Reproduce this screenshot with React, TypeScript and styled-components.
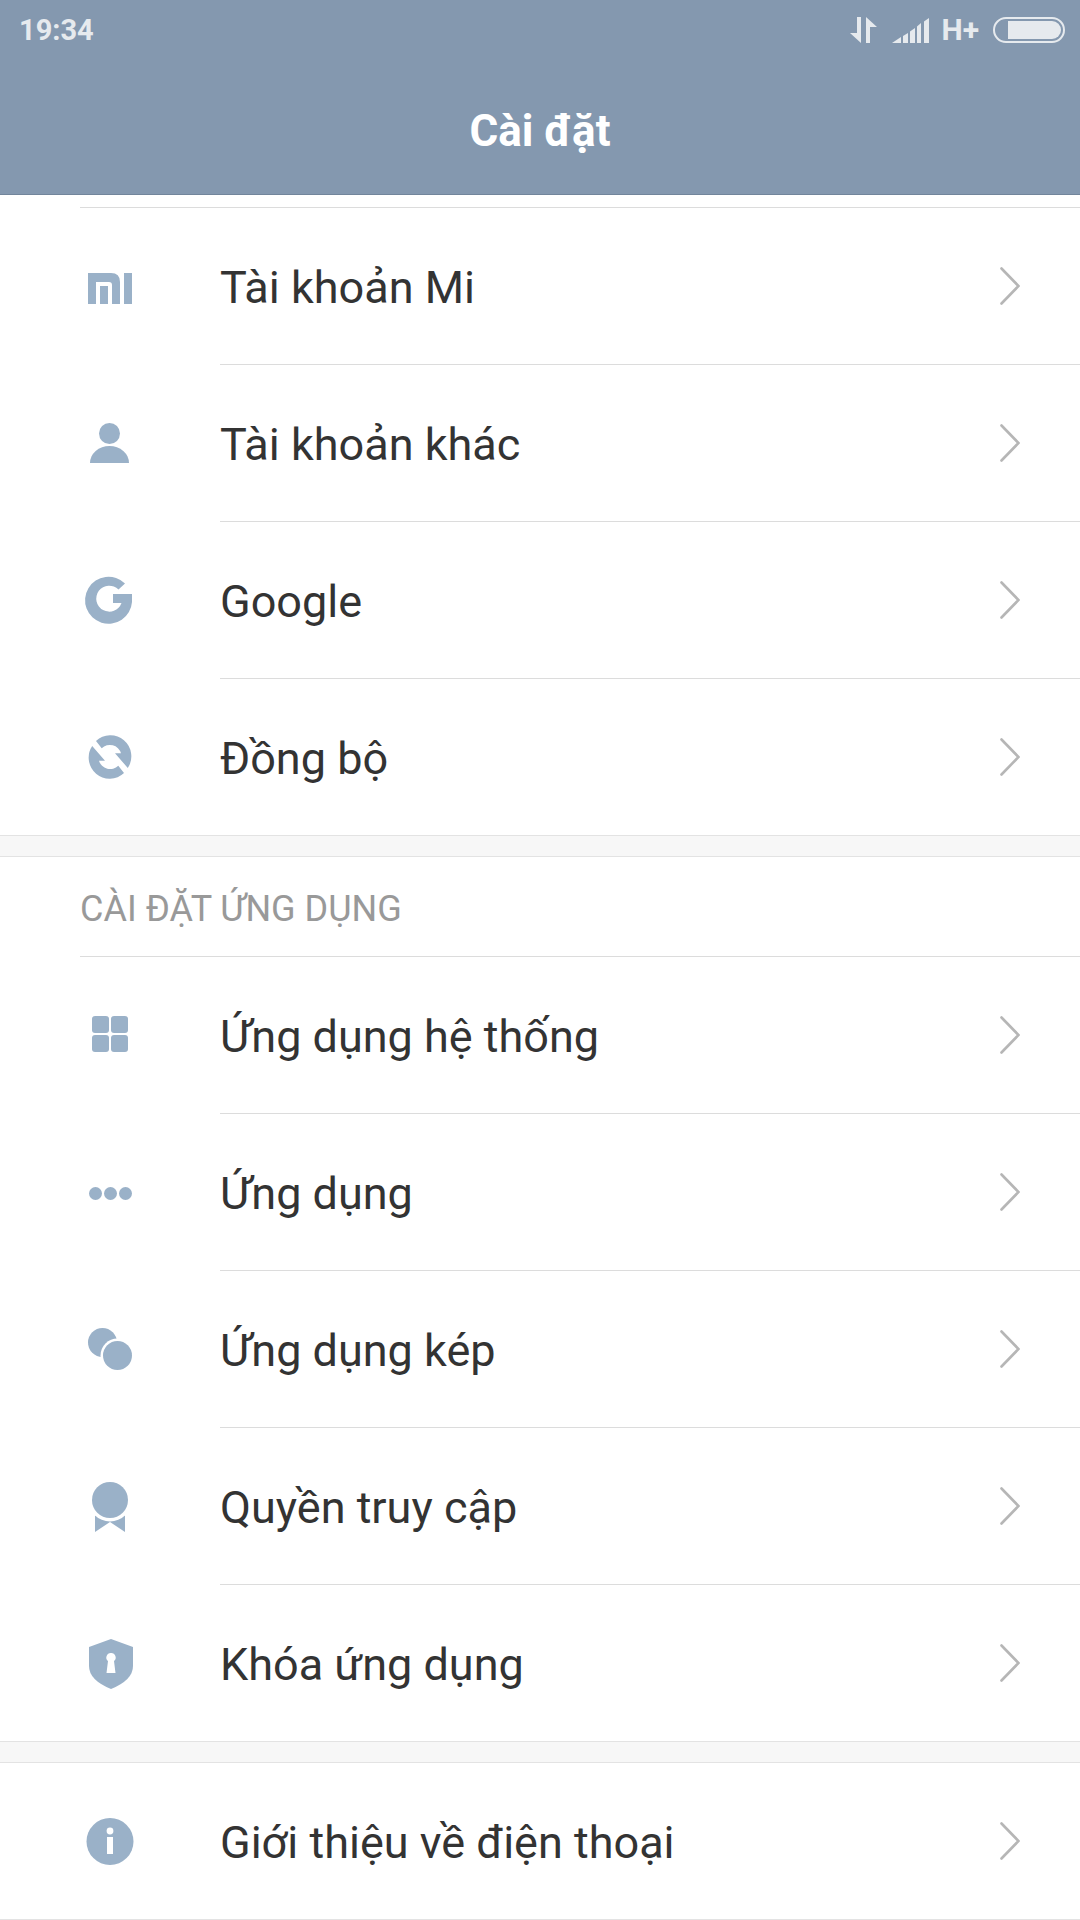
import React from "react";
import styled, { createGlobalStyle } from "styled-components";

const GlobalStyle = createGlobalStyle`
  html, body {
    margin: 0;
    padding: 0;
    background: #ffffff;
  }
  body {
    width: 1080px;
    height: 1920px;
    overflow: hidden;
    font-family: Roboto, "Noto Sans", sans-serif;
  }
`;

const ICON_COLOR = "#9ab1c8";

const Page = styled.div`
  display: flex;
  flex-direction: column;
  width: 1080px;
  height: 1920px;
  overflow: hidden;
`;

const Header = styled.header`
  display: flex;
  flex-direction: column;
  flex: none;
  height: 194px;
  background: #8498af;
  border-bottom: 1px solid #72859b;
`;

const StatusBar = styled.div`
  display: flex;
  align-items: center;
  justify-content: space-between;
  height: 60px;
  padding: 0 15px 0 19px;
`;

const Clock = styled.span`
  font-size: 29px;
  font-weight: 700;
  color: #e6eaee;
`;

const Title = styled.h1`
  flex: 1;
  margin: 0;
  padding-top: 7px;
  display: flex;
  align-items: center;
  justify-content: center;
  font-size: 44px;
  font-weight: 700;
  color: #ffffff;
`;

const StatusIcons = styled.div`
  display: flex;
  align-items: center;
`;

const NetworkType = styled.span`
  margin: 0 14px 0 12px;
  font-size: 30px;
  font-weight: 700;
  line-height: 30px;
  color: #e6eaee;
`;

const Battery = styled.div`
  box-sizing: border-box;
  display: flex;
  justify-content: flex-end;
  width: 72px;
  height: 26px;
  padding: 2px;
  border: 2px solid #e6eaee;
  border-radius: 13px;
`;

const BatteryFill = styled.div`
  width: 53px;
  background: #e6eaee;
  border-radius: 0 9px 9px 0;
`;

const Spacer = styled.div`
  flex: none;
  height: 12px;
`;

const Group = styled.section`
  display: flex;
  flex-direction: column;
  flex: none;
`;

const Gap = styled.div`
  flex: none;
  height: 22px;
  background: #f7f7f7;
  border-top: 1px solid #e3e3e3;
  border-bottom: 1px solid #e3e3e3;
  box-sizing: border-box;
`;

const TopLine = styled.div`
  height: 1px;
  margin-left: 80px;
  background: #dcdcdc;
`;

const BottomLine = styled.div`
  flex: none;
  height: 1px;
  background: #e3e3e3;
`;

const SectionTitle = styled.div`
  box-sizing: border-box;
  display: flex;
  align-items: center;
  height: 100px;
  margin-left: 80px;
  padding-top: 4px;
  border-bottom: 1px solid #dcdcdc;
  font-size: 36px;
  color: #999999;
`;

const Row = styled.div<{ $last: boolean }>`
  display: flex;
  align-items: stretch;
  height: ${({ $last }) => ($last ? "156px" : "157px")};
  padding-left: 80px;
  box-sizing: border-box;
`;

const IconCell = styled.div`
  flex: none;
  width: 60px;
  height: 60px;
  margin: 47px 80px 0 0;
`;

const RowBody = styled.div<{ $divider: boolean }>`
  flex: 1;
  display: flex;
  align-items: center;
  justify-content: space-between;
  padding-right: 60px;
  border-bottom: ${({ $divider }) => ($divider ? "1px solid #dcdcdc" : "none")};
`;

const Label = styled.span`
  font-size: 45px;
  color: #333333;
  padding-top: 3px;
`;

const Svg = styled.svg`
  display: block;
`;

const Chevron = () => (
  <Svg width="20" height="38" viewBox="0 0 20 38" fill="none">
    <path d="M1.5 1.5 L18.5 19 L1.5 36.5" stroke="#b6b6b6" strokeWidth="2.6" strokeLinecap="round" strokeLinejoin="miter" />
  </Svg>
);

const Icon = ({ children }: { children: React.ReactNode }) => (
  <IconCell>
    <Svg width="60" height="60" viewBox="0 0 60 60" fill={ICON_COLOR} style={{ overflow: "visible" }}>
      {children}
    </Svg>
  </IconCell>
);

const MiIcon = () => (
  <Icon>
    <path d="M8 18H31Q40 18 40 27V49H32V30Q32 27 29 27H16V49H8Z" />
    <rect x="20" y="31" width="8" height="18" />
    <rect x="44" y="18" width="8" height="31" />
  </Icon>
);

const PersonIcon = () => (
  <Icon>
    <circle cx="29.5" cy="21.5" r="10.5" />
    <path d="M10 51A19.5 17 0 0 1 49 51Z" />
  </Icon>
);

const GoogleIcon = () => (
  <Icon>
    <path d="M45 14.5A23.5 23.5 0 1 0 52 33V25H33V34H41.5A13 13 0 1 1 38.5 20.5Z" />
  </Icon>
);

const SYNC_ARC = "M-14 -16A21 21 0 0 1 17.8 11L5 -3.7H11A11.6 11.6 0 0 0 -8.3 -8.7Z";

const SyncIcon = () => (
  <Icon>
    <g transform="translate(30 31)">
      <path d={SYNC_ARC} />
      <path d={SYNC_ARC} transform="rotate(180)" />
    </g>
  </Icon>
);

const AppsIcon = () => (
  <Icon>
    <rect x="12" y="12" width="17" height="17" rx="3" />
    <rect x="31" y="12" width="17" height="17" rx="3" />
    <rect x="12" y="31" width="17" height="17" rx="3" />
    <rect x="31" y="31" width="17" height="17" rx="3" />
  </Icon>
);

const DotsIcon = () => (
  <Icon>
    <circle cx="15.5" cy="32.5" r="6.5" />
    <circle cx="30.5" cy="32.5" r="6.5" />
    <circle cx="45.5" cy="32.5" r="6.5" />
  </Icon>
);

const DualIcon = () => (
  <Icon>
    <circle cx="22.5" cy="24.5" r="14.5" />
    <circle cx="37.5" cy="37.5" r="17" fill="#ffffff" />
    <circle cx="37.5" cy="37.5" r="14.5" />
  </Icon>
);

const MedalIcon = () => (
  <Icon>
    <path d="M15 38H45V57L30 47L15 57Z" />
    <circle cx="30" cy="25" r="21.5" fill="#ffffff" />
    <circle cx="30" cy="25" r="18" />
  </Icon>
);

const ShieldIcon = () => (
  <Icon>
    <path d="M31 7L53 15V34Q53 48 31 57Q9 48 9 34V15Z" />
    <path
      d="M31 21a4.5 4.5 0 0 1 3 8L35.5 41H26.5L28 29A4.5 4.5 0 0 1 31 21Z"
      fill="#ffffff"
    />
  </Icon>
);

const InfoIcon = () => (
  <Icon>
    <circle cx="30" cy="31.5" r="23.5" />
    <circle cx="30" cy="21" r="3.4" fill="#ffffff" />
    <rect x="27" y="27" width="6" height="17" fill="#ffffff" />
  </Icon>
);

const DataArrows = () => (
  <Svg width="27" height="26" viewBox="0 0 27 26" fill="#e6eaee">
    <path d="M7 0H11V26L0 16H7Z" />
    <path d="M16 0L27 10H20V26H16Z" />
  </Svg>
);

const SignalBars = () => (
  <Svg width="37" height="25" viewBox="0 0 37 25" fill="#e6eaee" style={{ marginLeft: 15 }}>
    <path d="M0 25L9 19V25Z" />
    <path d="M11 18L16 15V25H11Z" />
    <path d="M18 13.5L23 10V25H18Z" />
    <path d="M25 8.5L29 5V25H25Z" />
    <path d="M32 3.5L37 0V25H32Z" />
  </Svg>
);

type Item = { label: string; icon: React.ComponentType };

const ACCOUNTS: Item[] = [
  { label: "Tài khoản Mi", icon: MiIcon },
  { label: "Tài khoản khác", icon: PersonIcon },
  { label: "Google", icon: GoogleIcon },
  { label: "Đồng bộ", icon: SyncIcon },
];

const APPS: Item[] = [
  { label: "Ứng dụng hệ thống", icon: AppsIcon },
  { label: "Ứng dụng", icon: DotsIcon },
  { label: "Ứng dụng kép", icon: DualIcon },
  { label: "Quyền truy cập", icon: MedalIcon },
  { label: "Khóa ứng dụng", icon: ShieldIcon },
];

const ABOUT: Item[] = [{ label: "Giới thiệu về điện thoại", icon: InfoIcon }];

const Rows = ({ items }: { items: Item[] }) => (
  <>
    {items.map(({ label, icon: ItemIcon }, i) => {
      const last = i === items.length - 1;
      return (
        <Row key={label} $last={last}>
          <ItemIcon />
          <RowBody $divider={!last}>
            <Label>{label}</Label>
            <Chevron />
          </RowBody>
        </Row>
      );
    })}
  </>
);

export default function App() {
  return (
    <Page>
      <GlobalStyle />
      <Header>
        <StatusBar>
          <Clock>19:34</Clock>
          <StatusIcons>
            <DataArrows />
            <SignalBars />
            <NetworkType>H+</NetworkType>
            <Battery>
              <BatteryFill />
            </Battery>
          </StatusIcons>
        </StatusBar>
        <Title>Cài đặt</Title>
      </Header>
      <Spacer />
      <TopLine />
      <Group>
        <Rows items={ACCOUNTS} />
      </Group>
      <Gap />
      <Group>
        <SectionTitle>CÀI ĐẶT ỨNG DỤNG</SectionTitle>
        <Rows items={APPS} />
      </Group>
      <Gap />
      <Group>
        <Rows items={ABOUT} />
      </Group>
      <BottomLine />
    </Page>
  );
}
